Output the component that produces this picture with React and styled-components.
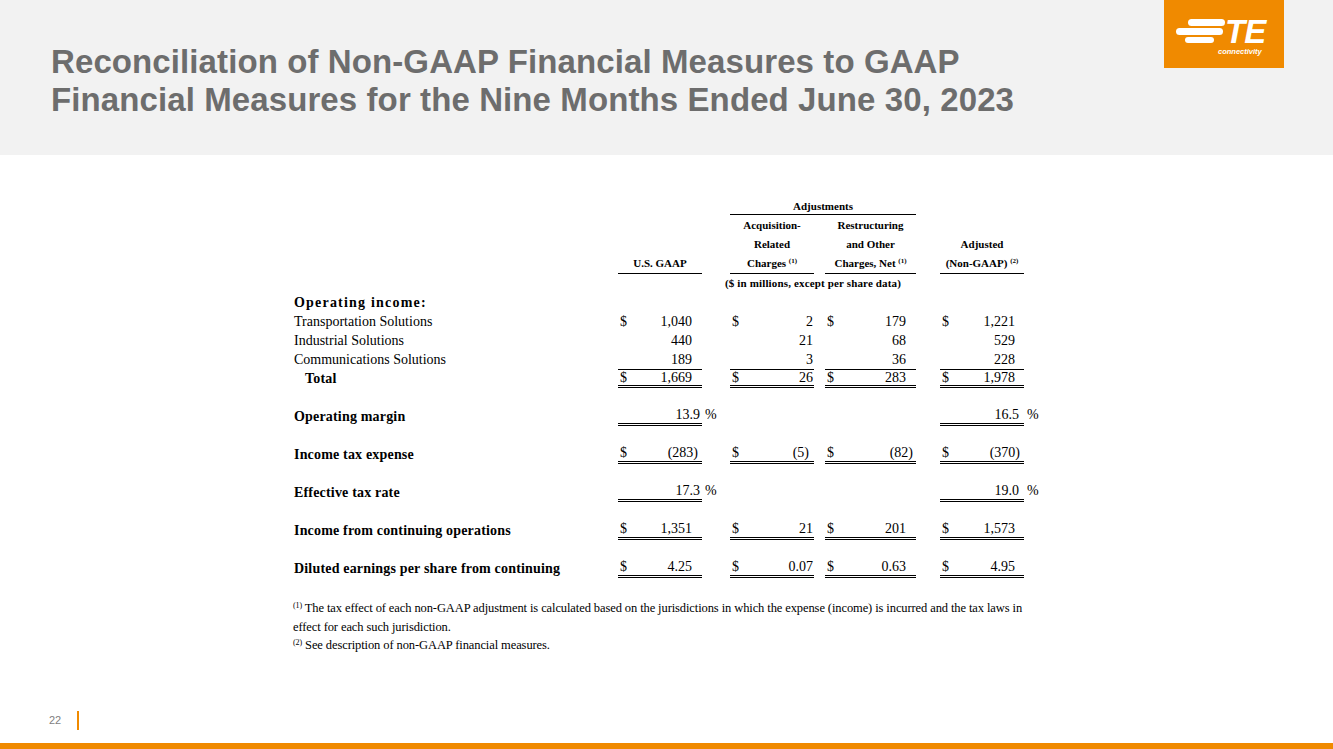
import styled, { createGlobalStyle } from 'styled-components';

const ORANGE = '#f08a00';
const COLS = '324px 84px 28px 84px 11px 91px 24px 84px 24px';
const SERIF = '"Liberation Serif", "Times New Roman", serif';

const GlobalStyle = createGlobalStyle`
  html, body { margin: 0; padding: 0; background: #fff; }
  body { font-family: "Liberation Sans", Arial, sans-serif; }
`;

// value columns: US GAAP, Acquisition, Restructuring, Adjusted
const VALUE_COLS = [2, 4, 6, 8];
const PADS = [
  { pos: 10, neg: 4, pct: 2 },
  { pos: 1, neg: 5 },
  { pos: 10, neg: 3 },
  { pos: 9, neg: 4, pct: 5 },
];

const ROWS = [
  { label: 'Operating income:', bold: true, spacing: 1.2 },
  { label: 'Transportation Solutions', vals: [['$', '1,040'], ['$', '2'], ['$', '179'], ['$', '1,221']] },
  { label: 'Industrial Solutions', vals: [['', '440'], ['', '21'], ['', '68'], ['', '529']] },
  { label: 'Communications Solutions', vals: [['', '189'], ['', '3'], ['', '36'], ['', '228']] },
  { label: 'Total', bold: true, indent: 11, rule: 'total', vals: [['$', '1,669'], ['$', '26'], ['$', '283'], ['$', '1,978']] },
  { label: 'Operating margin', bold: true, gap: 19, rule: 'double', pct: true, vals: [['', '13.9'], null, null, ['', '16.5']] },
  { label: 'Income tax expense', bold: true, gap: 19, rule: 'double', vals: [['$', '(283)'], ['$', '(5)'], ['$', '(82)'], ['$', '(370)']] },
  { label: 'Effective tax rate', bold: true, gap: 19, rule: 'double', pct: true, vals: [['', '17.3'], null, null, ['', '19.0']] },
  { label: 'Income from continuing operations', bold: true, gap: 19, rule: 'double', vals: [['$', '1,351'], ['$', '21'], ['$', '201'], ['$', '1,573']] },
  { label: 'Diluted earnings per share from continuing', bold: true, gap: 19, rule: 'double', vals: [['$', '4.25'], ['$', '0.07'], ['$', '0.63'], ['$', '4.95']] },
];

function App() {
  return (
    <>
      <GlobalStyle />
      <Page>
        <Header>
          <Title>
            Reconciliation of Non-GAAP Financial Measures to GAAP
            <br />
            Financial Measures for the Nine Months Ended June 30, 2023
          </Title>
          <LogoBox>
            <svg width="120" height="68" viewBox="0 0 120 68">
              <rect x="24" y="19" width="37" height="7" rx="3.5" fill="#fff" />
              <rect x="12" y="28" width="47" height="7" rx="3.5" fill="#fff" />
              <rect x="21" y="37" width="29" height="6" rx="3" fill="#fff" />
              <text x="61" y="43" fill="#fff" fontFamily="Liberation Sans, Arial, sans-serif" fontWeight="700" fontStyle="italic" fontSize="33" letterSpacing="-0.8">TE</text>
              <text x="54" y="53.5" fill="#fff" fontFamily="Liberation Sans, Arial, sans-serif" fontWeight="700" fontStyle="italic" fontSize="7.5">connectivity</text>
            </svg>
          </LogoBox>
        </Header>

        <Main>
          <Table>
            <HeadRow>
              <SpanHead>Adjustments</SpanHead>
            </HeadRow>
            <HeadRow $end>
              <HeadCell $col={2}>U.S. GAAP</HeadCell>
              <HeadCell $col={4}>
                Acquisition-<br />Related<br />Charges <Sup>(1)</Sup>
              </HeadCell>
              <HeadCell $col={6}>
                Restructuring<br />and Other<br />Charges, Net <Sup>(1)</Sup>
              </HeadCell>
              <HeadCell $col={8}>
                Adjusted<br />(Non-GAAP) <Sup>(2)</Sup>
              </HeadCell>
            </HeadRow>
            <HeadRow>
              <Units>($ in millions, except per share data)</Units>
            </HeadRow>

            {ROWS.map((row) => (
              <Row key={row.label} $gap={row.gap}>
                <Label $bold={row.bold} $indent={row.indent} $spacing={row.spacing}>
                  {row.label}
                </Label>
                {row.vals &&
                  row.vals.map((v, i) => {
                    if (!v) return null;
                    const pad = PADS[i];
                    const pr = row.pct ? pad.pct : v[1].startsWith('(') ? pad.neg : pad.pos;
                    return (
                      <Amount key={i} $col={VALUE_COLS[i]} $rule={row.rule} $pr={pr}>
                        <span>{v[0]}</span>
                        <span>{v[1]}</span>
                      </Amount>
                    );
                  })}
                {row.pct && (
                  <>
                    <Pct $col={3}>%</Pct>
                    <Pct $col={9}>%</Pct>
                  </>
                )}
              </Row>
            ))}

            <Notes>
              <Note>
                <NoteSup>(1)</NoteSup> The tax effect of each non-GAAP adjustment is calculated based on the jurisdictions in which the expense (income) is incurred and the tax laws in
                <br />
                effect for each such jurisdiction.
              </Note>
              <Note>
                <NoteSup>(2)</NoteSup> See description of non-GAAP financial measures.
              </Note>
            </Notes>
          </Table>
        </Main>

        <Footer>
          <PageNum>22</PageNum>
          <Divider />
        </Footer>
        <BottomBar />
      </Page>
    </>
  );
}

const Page = styled.div`
  width: 1333px;
  height: 749px;
  display: flex;
  flex-direction: column;
  overflow: hidden;
  background: #fff;
`;

const Header = styled.header`
  height: 155px;
  flex-shrink: 0;
  background: #f2f2f2;
  display: flex;
  justify-content: space-between;
  align-items: flex-start;
`;

const Title = styled.h1`
  margin: 0;
  padding: 43px 0 0 51px;
  font-family: "Liberation Sans", Arial, sans-serif;
  font-size: 33px;
  line-height: 38px;
  font-weight: 700;
  letter-spacing: 0.1px;
  color: #6d6d6d;
  white-space: nowrap;
`;

const LogoBox = styled.div`
  width: 120px;
  height: 68px;
  margin-right: 49px;
  background: ${ORANGE};
  svg { display: block; }
`;

const Main = styled.main`
  flex: 1;
  padding: 43px 0 0 294px;
`;

const Table = styled.div`
  font-family: ${SERIF};
  color: #000;
`;

const HeadRow = styled.div`
  display: grid;
  grid-template-columns: ${COLS};
  align-items: ${(p) => (p.$end ? 'end' : 'start')};
  margin-top: ${(p) => (p.$end ? '1px' : '0')};
  font-size: 11px;
  font-weight: 700;
`;

const SpanHead = styled.div`
  grid-column: 4 / 7;
  text-align: center;
  line-height: 16px;
  border-bottom: 1px solid #000;
`;

const HeadCell = styled.div`
  grid-column: ${(p) => p.$col};
  grid-row: 1;
  text-align: center;
  line-height: 19px;
  border-bottom: 1px solid #000;
  white-space: nowrap;
`;

const Sup = styled.sup`
  font-size: 7px;
  vertical-align: 4px;
  line-height: 0;
`;

const Units = styled.div`
  grid-column: 3 / 7;
  padding-left: 8px;
  text-align: center;
  line-height: 19px;
  letter-spacing: 0.15px;
`;

const Row = styled.div`
  display: grid;
  grid-template-columns: ${COLS};
  height: 19px;
  margin-top: ${(p) => p.$gap || 0}px;
  font-size: 14px;
`;

const Label = styled.div`
  grid-column: 1;
  grid-row: 1;
  line-height: 19px;
  padding-left: ${(p) => p.$indent || 0}px;
  font-weight: ${(p) => (p.$bold ? 700 : 400)};
  letter-spacing: ${(p) => (p.$spacing ?? (p.$bold ? 0.18 : 0))}px;
  white-space: nowrap;
`;

const Amount = styled.div`
  grid-column: ${(p) => p.$col};
  grid-row: 1;
  box-sizing: border-box;
  height: 19px;
  display: flex;
  align-items: center;
  justify-content: space-between;
  padding: 0 ${(p) => p.$pr}px 0 2px;
  border-top: ${(p) => (p.$rule === 'total' ? '1px solid #000' : 'none')};
  border-bottom: ${(p) => (p.$rule ? '3px double #000' : 'none')};
`;

const Pct = styled.div`
  grid-column: ${(p) => p.$col};
  grid-row: 1;
  line-height: 16px;
  padding-left: 3px;
`;

const Notes = styled.div`
  margin-top: 21px;
  margin-left: -1px;
`;

const Note = styled.p`
  margin: 0;
  font-size: 12.5px;
  line-height: 18.5px;
  white-space: nowrap;
  letter-spacing: -0.1px;
`;

const NoteSup = styled.sup`
  font-size: 8px;
  vertical-align: 4px;
  line-height: 0;
`;

const Footer = styled.footer`
  height: 38px;
  box-sizing: border-box;
  padding: 0 0 8px 49px;
  display: flex;
  align-items: center;
  flex-shrink: 0;
`;

const PageNum = styled.span`
  font-family: "Liberation Sans", Arial, sans-serif;
  font-size: 11px;
  color: #7f7f7f;
  margin-right: 16px;
`;

const Divider = styled.span`
  width: 1.5px;
  height: 19px;
  background: ${ORANGE};
`;

const BottomBar = styled.div`
  height: 6px;
  flex-shrink: 0;
  background: ${ORANGE};
`;

export default App;
